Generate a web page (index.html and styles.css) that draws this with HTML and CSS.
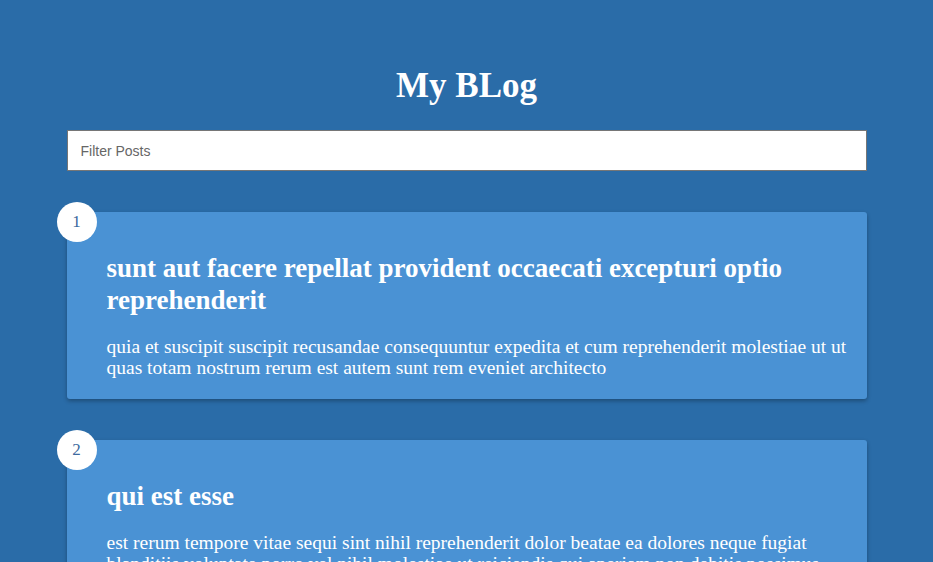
FILE: index.html
```html
<!DOCTYPE html>
<html>
<head>
<meta charset="utf-8">
<link rel="stylesheet" href="styles.css">
</head>
<body>
<div class="container">
  <h1 class="title">My BLog</h1>
  <input class="filter" type="text" placeholder="Filter Posts">
  <div class="posts">
    <div class="post">
      <div class="number">1</div>
      <h2 class="post-title">sunt aut facere repellat provident occaecati excepturi optio reprehenderit</h2>
      <p class="post-body">quia et suscipit suscipit recusandae consequuntur expedita et cum reprehenderit molestiae ut ut quas totam nostrum rerum est autem sunt rem eveniet architecto</p>
    </div>
    <div class="post">
      <div class="number">2</div>
      <h2 class="post-title">qui est esse</h2>
      <p class="post-body">est rerum tempore vitae sequi sint nihil reprehenderit dolor beatae ea dolores neque fugiat blanditiis voluptate porro vel nihil molestiae ut reiciendis qui aperiam non debitis possimus qui neque nisi nulla</p>
    </div>
  </div>
</div>
</body>
</html>
```

FILE: styles.css
```css
html, body {
  margin: 0;
  padding: 0;
}
body {
  background: #2a6ca8;
  font-family: "Liberation Serif", "Times New Roman", serif;
  color: #fff;
  overflow: hidden;
  height: 562px;
}
.container {
  width: 800px;
  margin: 0 auto;
  padding-top: 62px;
  display: flex;
  flex-direction: column;
}
.title {
  margin: 0 0 20px;
  text-align: center;
  font-size: 35px;
  line-height: 48px;
  font-weight: bold;
}
.filter {
  box-sizing: border-box;
  width: 800px;
  height: 41px;
  border: 1px solid #767676;
  padding: 0 13px;
  font-family: "Liberation Sans", Arial, sans-serif;
  font-size: 14px;
  color: #333;
  outline: none;
}
.filter::placeholder {
  color: #666;
}
.posts {
  display: flex;
  flex-direction: column;
  gap: 41px;
  margin-top: 41px;
}
.post {
  position: relative;
  background: #4a92d4;
  border-radius: 3px;
  box-shadow: 0 2px 4px rgba(0, 0, 0, 0.3);
  padding: 40px 18px 21px 40px;
}
.number {
  position: absolute;
  left: -10px;
  top: -10px;
  width: 40px;
  height: 40px;
  border-radius: 50%;
  background: #fff;
  color: #3d6a9e;
  font-size: 17px;
  display: flex;
  align-items: center;
  justify-content: center;
}
.post-title {
  margin: 0 0 20px;
  font-size: 27px;
  line-height: 32px;
  font-weight: bold;
}
.post-body {
  margin: 0;
  font-size: 19.5px;
  line-height: 21px;
}
```
